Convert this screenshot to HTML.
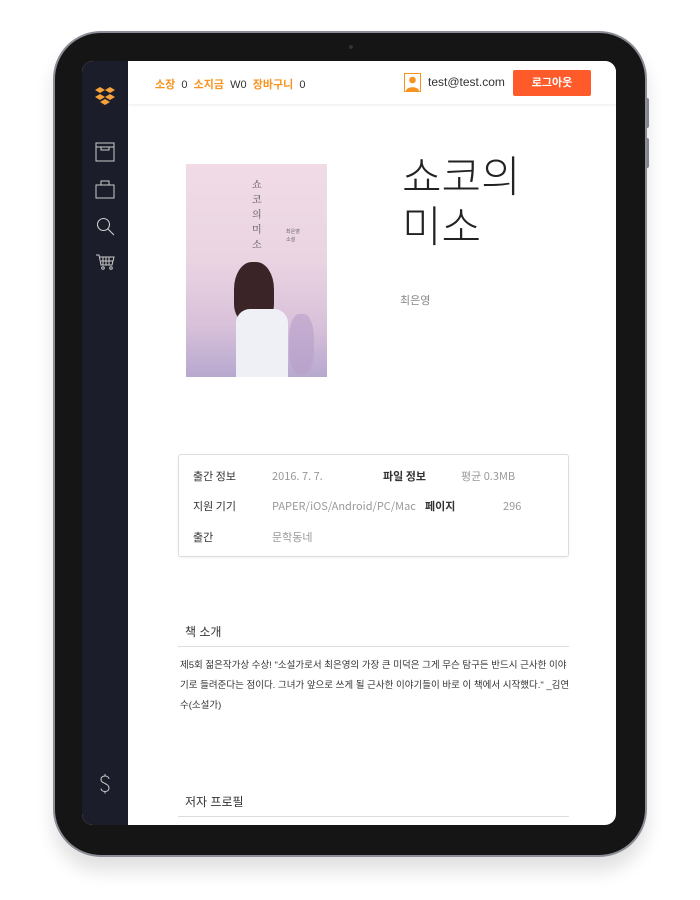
<!DOCTYPE html>
<html><head><meta charset="utf-8"><style>
*{margin:0;padding:0;box-sizing:border-box}
body{width:700px;height:900px;background:#fff;position:relative;overflow:hidden;font-family:"Liberation Sans","Noto Sans CJK KR",sans-serif}
.dev{position:absolute;left:53px;top:31px;width:594px;height:826px;background:#151515;border-radius:48px;border:2px solid #8a8d96;box-shadow:0 14px 18px rgba(0,0,0,.12)}
.btn{position:absolute;left:645px;width:4px;background:#8a8d96;border-radius:2px}
.cam{position:absolute;left:349px;top:45px;width:4px;height:4px;border-radius:50%;background:#333}
.screen{position:absolute;left:82px;top:61px;width:534px;height:764px;background:#fff;border-radius:11px;overflow:hidden}
.side{position:absolute;left:0;top:0;width:46px;height:100%;background:#1b1e2a}
.hdr{position:absolute;left:46px;top:0;right:0;height:43px;background:#fff;box-shadow:0 1px 3px rgba(0,0,0,.08);font-size:11px}
.o{color:#f7931e;font-weight:600}
.abs{position:absolute}
.lbl{color:#333;font-size:11px;line-height:14px;font-family:"Noto Sans CJK KR",sans-serif}
.val{color:#999;font-size:11px;line-height:14px;font-family:"Noto Sans CJK KR",sans-serif}
</style></head><body>
<div class="btn" style="top:98px;height:30px"></div>
<div class="btn" style="top:138px;height:30px"></div>
<div class="dev"></div>
<div class="cam"></div>
<div class="screen">
 <div class="side">
  <svg class="abs" style="left:12px;top:24px" width="22" height="22" viewBox="0 0 22 22" fill="#f7a13a"><path d="M6 2l5 3-5 3-5-3z M16 2l5 3-5 3-5-3z M6 9l5 3-5 3-5-3z M16 9l5 3-5 3-5-3z M11 14l5 3-5 3-5-3z"/></svg>
  <svg class="abs" style="left:13px;top:81px" width="20" height="20" viewBox="0 0 20 20" fill="none" stroke="#ccc" stroke-width="1"><rect x="1" y="1" width="18" height="18"/><path d="M1 5h18M6 5v3h8V5"/></svg>
  <svg class="abs" style="left:13px;top:118px" width="20" height="20" viewBox="0 0 20 20" fill="none" stroke="#ccc" stroke-width="1"><rect x="1" y="6" width="18" height="13"/><path d="M6 6V2h8v4"/></svg>
  <svg class="abs" style="left:14px;top:156px" width="20" height="20" viewBox="0 0 20 20" fill="none" stroke="#ccc" stroke-width="1.1"><circle cx="7.5" cy="7.5" r="6"/><path d="M12 12l6 6"/></svg>
  <svg class="abs" style="left:13px;top:192px" width="20" height="18" viewBox="0 0 20 18" fill="none" stroke="#ccc" stroke-width="1"><path d="M1 2h3l2 10h11l2-8H5M8 4v8M11 4v8M14 4v8M6 8h12"/><circle cx="8" cy="15" r="1.3"/><circle cx="16" cy="15" r="1.3"/></svg>
  <svg class="abs" style="left:17px;top:712px" width="12" height="22" viewBox="0 0 12 22" fill="none" stroke="#ccc" stroke-width="1"><path d="M10 6c0-2-2-3-4-3S2 4 2 6.5 4 9.5 6 10.5s4 2 4 4.5-2 3.5-4 3.5-4-1-4-3M6 1v2M6 18.5v2"/></svg>
 </div>
 <div class="hdr">
  <div class="abs" style="left:27px;top:15px;white-space:nowrap"><span class="o">소장</span>&nbsp; <span style="color:#333">0</span>&nbsp; <span class="o">소지금</span>&nbsp; <span style="color:#333">W0</span>&nbsp; <span class="o">장바구니</span>&nbsp; <span style="color:#333">0</span></div>
  <svg class="abs" style="left:276px;top:12px" width="17" height="19" viewBox="0 0 17 19"><rect x="0.5" y="0.5" width="16" height="18" fill="#fff" stroke="#f7931e"/><circle cx="8.5" cy="7" r="3.3" fill="#f7931e"/><path d="M2 18c0-5 13-5 13 0z" fill="#f7931e"/></svg>
  <div class="abs" style="left:300px;top:14px;font-size:12px;color:#333">test@test.com</div>
  <div class="abs" style="left:385px;top:9px;width:78px;height:26px;background:#ff5a2a;border-radius:2px;color:#fff;font-size:11px;font-weight:bold;text-align:center;line-height:26px">로그아웃</div>
 </div>
 <div class="abs" style="left:104px;top:103px;width:141px;height:213px;overflow:hidden;background:linear-gradient(180deg,#f0dbe6 0%,#ead4e2 45%,#d9c2da 75%,#b7a8cf 100%)">
  <div class="abs" style="left:66px;top:12px;font-family:'Noto Serif CJK SC',serif;font-size:10px;color:#555;width:12px;line-height:15px">쇼코의미소</div>
  <div class="abs" style="left:100px;top:64px;font-size:5px;color:#666;width:20px;line-height:8px">최은영<br>소설</div>
  <div class="abs" style="left:48px;top:98px;width:40px;height:60px;background:#3a2428;border-radius:45% 45% 30% 30%"></div>
  <div class="abs" style="left:50px;top:145px;width:52px;height:68px;background:#eef0f6;border-radius:14px 14px 0 0"></div>
  <div class="abs" style="left:103px;top:150px;width:25px;height:60px;background:#b89fc9;border-radius:40%;opacity:.6"></div>
 </div>
 <div class="abs" style="left:320px;top:92px;font-size:43px;line-height:50px;color:#222;font-weight:300">쇼코의<br>미소</div>
 <div class="abs" style="left:318px;top:231px;font-size:11px;color:#888">최은영</div>
 <div class="abs" style="left:96px;top:393px;width:391px;height:103px;border:1px solid #ddd;border-radius:3px;box-shadow:0 1px 2px rgba(0,0,0,.06)">
  <div class="abs lbl" style="left:14px;top:14px">출간 정보</div>
  <div class="abs val" style="left:93px;top:14px">2016. 7. 7.</div>
  <div class="abs lbl" style="left:204px;top:14px;font-weight:bold">파일 정보</div>
  <div class="abs val" style="left:282px;top:14px">평균 0.3MB</div>
  <div class="abs lbl" style="left:14px;top:44px">지원 기기</div>
  <div class="abs val" style="left:93px;top:44px">PAPER/iOS/Android/PC/Mac</div>
  <div class="abs lbl" style="left:246px;top:44px;font-weight:bold">페이지</div>
  <div class="abs val" style="left:324px;top:44px">296</div>
  <div class="abs lbl" style="left:14px;top:75px">출간</div>
  <div class="abs val" style="left:93px;top:75px">문학동네</div>
 </div>
 <div class="abs" style="left:103px;top:562px;font-size:12px;color:#333">책 소개</div>
 <div class="abs" style="left:96px;top:585px;width:391px;height:1px;background:#ddd"></div>
 <div class="abs" style="left:98px;top:595px;width:392px;font-size:9.5px;line-height:20px;color:#333">제5회 젊은작가상 수상! "소설가로서 최은영의 가장 큰 미덕은 그게 무슨 탐구든 반드시 근사한 이야기로 들려준다는 점이다. 그녀가 앞으로 쓰게 될 근사한 이야기들이 바로 이 책에서 시작했다." _김연수(소설가)</div>
 <div class="abs" style="left:103px;top:732px;font-size:12px;color:#333">저자 프로필</div>
 <div class="abs" style="left:96px;top:755px;width:391px;height:1px;background:#ddd"></div>
</div>
</body></html>
